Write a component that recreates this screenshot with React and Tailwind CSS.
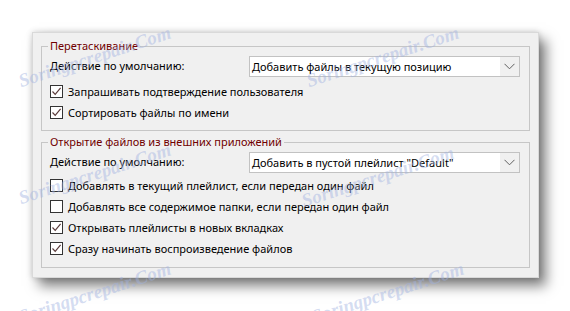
import React from "react";

const font = { fontFamily: '"Segoe UI", "Noto Sans", "Open Sans", sans-serif' };

function Check({ checked }) {
  return (
    <span className="w-[13px] h-[13px] border border-[#333333] bg-white flex items-center justify-center shrink-0">
      {checked && (
        <svg width="11" height="11" viewBox="0 0 11 11">
          <path d="M1.5 5.5 L4.2 8.3 L9.6 1.8" fill="none" stroke="#5a3a3a" strokeWidth="1.2" />
        </svg>
      )}
    </span>
  );
}

function Row({ checked, children }) {
  return (
    <div className="h-[21px] flex items-center gap-[5px]">
      <Check checked={checked} />
      <span className="text-[11px] text-black leading-none">{children}</span>
    </div>
  );
}

function Select({ value }) {
  return (
    <div className="w-[271px] h-[21px] bg-white border border-[#c2c2c2] flex items-center">
      <span className="flex-1 pl-[2px] text-[11px] text-black leading-none whitespace-nowrap">{value}</span>
      <span className="w-[19px] h-[19px] bg-[#f0f0f0] flex items-center justify-center">
        <svg width="11" height="7" viewBox="0 0 11 7">
          <path d="M0.5 0.8 L5.5 5.8 L10.5 0.8" fill="none" stroke="#606060" strokeWidth="1" />
        </svg>
      </span>
    </div>
  );
}

function Group({ title, children, pb }) {
  return (
    <fieldset className={"border border-[#c6c6c6] pl-[8px] pr-[9px] " + pb}>
      <legend className="px-[2px] -ml-[2px] text-[11px] leading-[16px] text-[#700000]">{title}</legend>
      <div className="pt-[2px]">{children}</div>
    </fieldset>
  );
}

const marks = [
  [22, 90], [310, 90], [22, 207], [305, 210], [22, 326], [315, 326],
];

export default function App() {
  return (
    <div className="relative w-[570px] h-[311px] bg-white overflow-hidden" style={font}>
      <div className="pt-[32px] pl-[32px]">
        <div className="w-[507px] h-[246px] bg-[#f0f0f0] border border-[#d9d9d9] px-[8px] pt-[5px] shadow-[0_0_6px_rgba(0,0,0,0.18),7px_8px_12px_rgba(0,0,0,0.5)]">
          <Group title="Перетаскивание" pb="pb-[7px]">
            <div className="flex items-center justify-between">
              <span className="text-[11px] text-black">Действие по умолчанию:</span>
              <Select value="Добавить файлы в текущую позицию" />
            </div>
            <div className="mt-[4px]">
              <Row checked>Запрашивать подтверждение пользователя</Row>
              <Row checked>Сортировать файлы по имени</Row>
            </div>
          </Group>
          <div className="mt-[3px]">
            <Group title="Открытие файлов из внешних приложений" pb="pb-[8px]">
              <div className="flex items-center justify-between">
                <span className="text-[11px] text-black">Действие по умолчанию:</span>
                <Select value='Добавить в пустой плейлист "Default"' />
              </div>
              <div className="mt-[2px]">
                <Row checked={false}>Добавлять в текущий плейлист, если передан один файл</Row>
                <Row checked={false}>Добавлять все содержимое папки, если передан один файл</Row>
                <Row checked>Открывать плейлисты в новых вкладках</Row>
                <Row checked>Сразу начинать воспроизведение файлов</Row>
              </div>
            </Group>
          </div>
        </div>
      </div>
      {marks.map(([x, y], i) => (
        <span
          key={i}
          className="absolute block whitespace-nowrap italic font-bold text-[19px] leading-none text-[rgba(160,178,225,0.45)] pointer-events-none"
          style={{ left: x, top: y - 19, fontFamily: '"Liberation Serif", serif', transform: "rotate(-18deg)", transformOrigin: "0% 100%" }}
        >
          Soringpcrepair.Com
        </span>
      ))}
    </div>
  );
}
